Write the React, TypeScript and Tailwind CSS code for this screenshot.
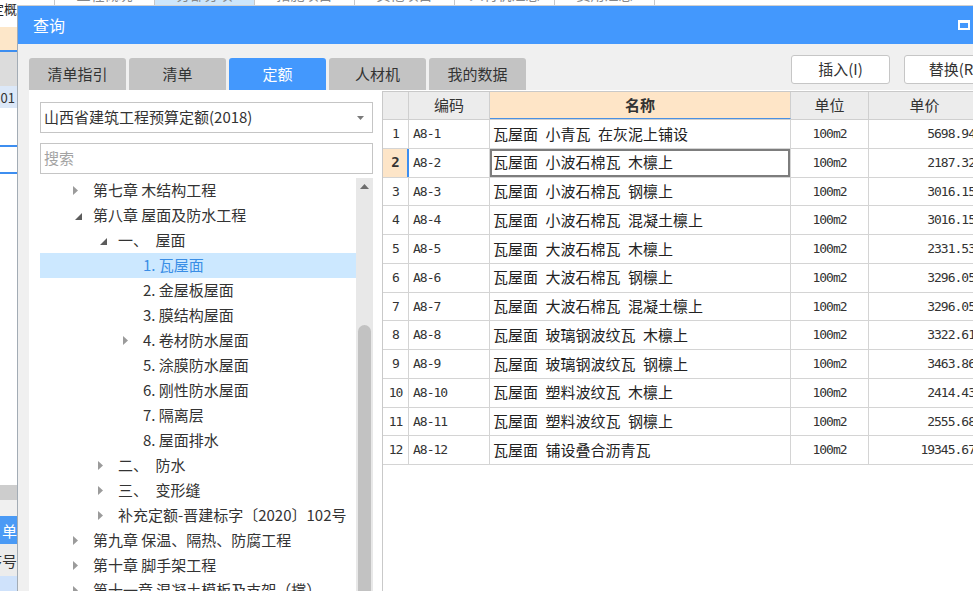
const topTabs = ['工程概况', '分部分项', '措施项目', '其他项目', '人材机汇总', '费用汇总']

const tabs = ['清单指引', '清单', '定额', '人材机', '我的数据']

type TreeNode = { level: number; arrow?: 'open' | 'closed'; label: string; active?: boolean }

const tree: TreeNode[] = [
  { level: 0, arrow: 'closed', label: '第七章 木结构工程' },
  { level: 0, arrow: 'open', label: '第八章 屋面及防水工程' },
  { level: 1, arrow: 'open', label: '一、\u2002屋面' },
  { level: 2, label: '1. 瓦屋面', active: true },
  { level: 2, label: '2. 金屋板屋面' },
  { level: 2, label: '3. 膜结构屋面' },
  { level: 2, arrow: 'closed', label: '4. 卷材防水屋面' },
  { level: 2, label: '5. 涂膜防水屋面' },
  { level: 2, label: '6. 刚性防水屋面' },
  { level: 2, label: '7. 隔离层' },
  { level: 2, label: '8. 屋面排水' },
  { level: 1, arrow: 'closed', label: '二、\u2002防水' },
  { level: 1, arrow: 'closed', label: '三、\u2002变形缝' },
  { level: 1, arrow: 'closed', label: '补充定额-晋建标字〔2020〕102号' },
  { level: 0, arrow: 'closed', label: '第九章 保温、隔热、防腐工程' },
  { level: 0, arrow: 'closed', label: '第十章 脚手架工程' },
  { level: 0, arrow: 'closed', label: '第十一章 混凝土模板及支架（撑）' },
]

const rows = [
  ['A8-1', '瓦屋面\u2002小青瓦\u2002在灰泥上铺设', '5698.94'],
  ['A8-2', '瓦屋面\u2002小波石棉瓦\u2002木檩上', '2187.32'],
  ['A8-3', '瓦屋面\u2002小波石棉瓦\u2002钢檩上', '3016.15'],
  ['A8-4', '瓦屋面\u2002小波石棉瓦\u2002混凝土檩上', '3016.15'],
  ['A8-5', '瓦屋面\u2002大波石棉瓦\u2002木檩上', '2331.53'],
  ['A8-6', '瓦屋面\u2002大波石棉瓦\u2002钢檩上', '3296.05'],
  ['A8-7', '瓦屋面\u2002大波石棉瓦\u2002混凝土檩上', '3296.05'],
  ['A8-8', '瓦屋面\u2002玻璃钢波纹瓦\u2002木檩上', '3322.61'],
  ['A8-9', '瓦屋面\u2002玻璃钢波纹瓦\u2002钢檩上', '3463.86'],
  ['A8-10', '瓦屋面\u2002塑料波纹瓦\u2002木檩上', '2414.43'],
  ['A8-11', '瓦屋面\u2002塑料波纹瓦\u2002钢檩上', '2555.68'],
  ['A8-12', '瓦屋面\u2002铺设叠合沥青瓦', '19345.67'],
]

const mono = "font-['DejaVu_Sans_Mono','Noto_Sans_CJK_SC',monospace] text-[13px] tracking-[-1px]"

const Arrow = ({ kind }: { kind?: 'open' | 'closed' }) => {
  if (kind === 'closed')
    return (
      <svg width="5" height="9" viewBox="0 0 5 9">
        <path d="M0 0 L5 4.5 L0 9Z" fill="#9b9b9b" />
      </svg>
    )
  if (kind === 'open')
    return (
      <svg width="7" height="7" viewBox="0 0 7 7" className="ml-[2px] mt-[2px]">
        <path d="M7 0 L7 7 L0 7Z" fill="#5c5c5c" />
      </svg>
    )
  return null
}

const App = () => {
  return (
    <div className="relative h-[591px] w-[973px] overflow-hidden bg-white font-['Noto_Sans_CJK_SC',sans-serif] text-[#333]">
      {/* underlying main window */}
      <div className="flex h-full">
        <div className="flex w-[17px] flex-col overflow-hidden leading-none">
          <div className="flex h-[27px] justify-end whitespace-nowrap pt-[2px] text-[13px] text-[#222]">预算定概</div>
          <div className="h-[23px] bg-[#fde7c9]" />
          <div className="h-[2px] bg-[#3d8ef0]" />
          <div className="h-[34px] bg-[#dcdcdc]" />
          <div className="flex h-[22px] items-center justify-end whitespace-nowrap bg-[#dce8f8] pr-[2px] text-[13px]">01</div>
          <div className="h-[37px]" />
          <div className="h-[2px] bg-[#3d8ef0]" />
          <div className="h-[25px]" />
          <div className="h-[2px] bg-[#3d8ef0]" />
          <div className="h-[311px]" />
          <div className="h-[15px] bg-[#cdcdcd]" />
          <div className="h-[16px] bg-[#f0f0f0]" />
          <div className="flex h-[28px] items-center bg-[#4a9af5] pl-[2px] text-[15px] text-white">单</div>
          <div className="flex h-[32px] items-center justify-end whitespace-nowrap bg-[#ececec] text-[15px]">序号</div>
          <div className="flex-1 bg-[#cfe2fb]" />
        </div>
        <div className="flex-1">
          <div className="flex h-[6px] overflow-hidden border-b border-[#d0d0d0]">
            <div className="w-[38px] border-r border-[#c8c8c8]" />
            {topTabs.map((t, i) => (
              <div
                key={t}
                className={`flex w-[100px] justify-center border-r border-[#c8c8c8] ${i === 1 ? 'bg-[#cde6fb]' : ''}`}
              >
                <span className="-mt-[14px] text-[14px] leading-[16px] text-[#888]">{t}</span>
              </div>
            ))}
          </div>
        </div>
      </div>

      {/* query dialog */}
      <div className="absolute left-[17px] top-[6px] flex h-[600px] w-[990px] flex-col border-l border-[#a3acb5] bg-[#f0f0f0]">
        <div className="flex h-[38px] items-center bg-[#4398fd] pl-[15px] text-[16px] text-white">
          <span className="w-[32px]">查询</span>
          <div className="ml-[893px] h-[10px] w-[12px] border-2 border-t-[3px] border-white" />
        </div>

        <div className="flex h-[46px] items-end pl-[11px]">
          <div className="flex gap-[3px]">
            {tabs.map((t, i) => (
              <div
                key={t}
                className={`flex h-[32px] w-[97px] items-center justify-center rounded-t-[3px] text-[15px] ${
                  i === 2 ? 'bg-[#4398fd] text-white' : 'bg-[#c3c3c3] text-[#333]'
                }`}
              >
                {t}
              </div>
            ))}
          </div>
          <div className="mb-[6px] ml-[265px] flex gap-[14px]">
            <div className="flex h-[29px] w-[99px] items-center justify-center rounded-[3px] border border-[#c6c6c6] bg-white text-[15px]">
              插入(I)
            </div>
            <div className="flex h-[29px] w-[99px] items-center justify-center rounded-[3px] border border-[#c6c6c6] bg-white text-[15px]">
              替换(R)
            </div>
          </div>
        </div>

        <div className="ml-[11px] flex flex-1 overflow-hidden bg-white">
          {/* left: quota library tree */}
          <div className="flex w-[353px] flex-col pl-[11px] pt-[12px]">
            <div className="flex h-[31px] w-[333px] items-center justify-between border border-[#c5c5c5] pl-[3px] pr-[8px] text-[15px]">
              <span>山西省建筑工程预算定额(2018)</span>
              <svg width="7" height="4" viewBox="0 0 7 4">
                <path d="M0 0 L7 0 L3.5 4Z" fill="#7a7a7a" />
              </svg>
            </div>
            <div className="mt-[10px] flex h-[31px] w-[333px] items-center border border-[#c5c5c5] pl-[3px] text-[15px] text-[#a3a3a3]">
              搜索
            </div>
            <div className="mt-[4px] flex flex-1 overflow-hidden">
              <div className="w-[316px]">
                {tree.map((n, i) => (
                  <div
                    key={i}
                    className={`flex h-[25px] items-center whitespace-nowrap text-[15px] ${
                      n.active ? 'bg-[#cce8ff] text-[#3a8ee6]' : ''
                    } ${n.level === 0 ? 'pl-[33px]' : n.level === 1 ? 'pl-[58px]' : 'pl-[83px]'}`}
                  >
                    <div className="flex w-[20px] items-center">
                      <Arrow kind={n.arrow} />
                    </div>
                    <span>{n.label}</span>
                  </div>
                ))}
              </div>
              <div className="flex w-[17px] flex-col items-center bg-[#e8e8e8]">
                <svg width="9" height="5" viewBox="0 0 9 5" className="mt-[6px]">
                  <path d="M4.5 0 L9 5 L0 5Z" fill="#6e6e6e" />
                </svg>
                <div className="mt-[136px] w-[13px] flex-1 rounded-t-full bg-[#c2c2c2]" />
              </div>
            </div>
          </div>

          {/* right: quota grid */}
          <div className="mt-[1px] flex-1 border-l border-t border-[#c9c9c9]">
            <div className="flex h-[28px] border-b border-[#cfcfcf] bg-[#ececec] text-[15px]">
              <div className="w-[26px] border-r border-[#cfcfcf]" />
              <div className="flex w-[81px] items-center justify-center border-r border-[#cfcfcf]">编码</div>
              <div className="flex w-[301px] items-center justify-center border-r border-b border-[#cfcfcf] border-b-[#4a90e2] bg-[#fee5c7] font-bold">
                名称
              </div>
              <div className="flex w-[78px] items-center justify-center border-r border-[#cfcfcf]">单位</div>
              <div className="flex w-[112px] items-center justify-center border-r border-[#cfcfcf]">单价</div>
            </div>
            {rows.map((r, i) => {
              const sel = i === 1
              return (
                <div key={r[0]} className="flex h-[28.75px] border-b border-[#d4d4d4]">
                  <div
                    className={`flex w-[26px] items-center justify-center ${mono} ${
                      sel ? 'border-r-2 border-[#3d8ef0] bg-[#fde5c8] font-bold text-[14px]' : 'border-r border-[#d4d4d4]'
                    }`}
                  >
                    {i + 1}
                  </div>
                  <div className={`flex w-[81px] items-center border-r border-[#d4d4d4] pl-[4px] ${mono}`}>{r[0]}</div>
                  <div
                    className={`flex w-[301px] items-center whitespace-nowrap border-r border-[#d4d4d4] pl-[3px] text-[15px] text-[#222] ${
                      sel ? 'shadow-[inset_0_0_0_2px_#7d7d7d]' : ''
                    }`}
                  >
                    {r[1]}
                  </div>
                  <div className={`flex w-[78px] items-center justify-center border-r border-[#d4d4d4] ${mono}`}>100m2</div>
                  <div className={`flex w-[112px] items-center justify-end border-r border-[#d4d4d4] pr-[5px] ${mono}`}>{r[2]}</div>
                </div>
              )
            })}
          </div>
        </div>
      </div>
    </div>
  )
}

export default App
